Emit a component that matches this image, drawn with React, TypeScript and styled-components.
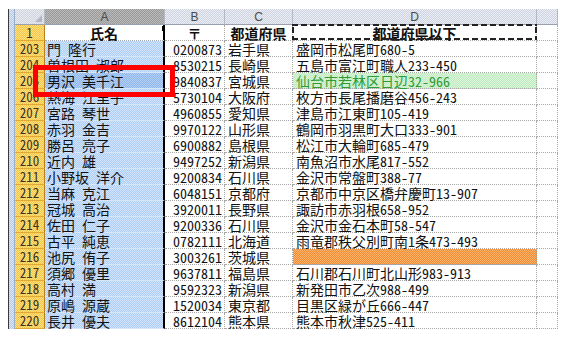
import React from 'react';
import styled, { createGlobalStyle, css } from 'styled-components';

const Global = createGlobalStyle`
  html, body { margin: 0; padding: 0; background: #fff; }
  body { width: 567px; height: 340px; overflow: hidden; }
`;

const dither = (a: string, b: string) => css`
  background-color: ${a};
  background-image: repeating-conic-gradient(${a} 0 25%, ${b} 0 50%);
  background-size: 2px 2px;
`;

const Page = styled.div`
  position: relative;
  padding: 9px 0 0 8px;
  font-family: "Noto Sans CJK JP", sans-serif;
  font-feature-settings: "hwid";
`;

const Sheet = styled.div`
  display: flex;
  align-items: stretch;
`;

const Strip = styled.div`
  width: 5px;
  border-left: 1px solid #3a3a3a;
  border-right: 1px solid #9aaec8;
  ${dither('#b8cae4', '#dde6f2')}
`;

const Grid = styled.div`
  display: grid;
  grid-template-columns: 30px 120px 60px 68px 244px 21px;
  grid-auto-rows: 16px;
`;

const Corner = styled.div`
  position: relative;
  box-sizing: border-box;
  border-right: 1px solid #b4b8c4;
  border-bottom: 1px solid #9aa0b0;
  ${dither('#cfd3de', '#e9ebf1')}
  &::after {
    content: '';
    position: absolute;
    right: 2px;
    bottom: 2px;
    border-left: 7px solid transparent;
    border-bottom: 7px solid #b2b6c0;
  }
`;

const ColHead = styled.div<{ $active?: boolean }>`
  box-sizing: border-box;
  display: flex;
  align-items: center;
  justify-content: center;
  font: 12px/1 "Liberation Sans", sans-serif;
  color: #4a4a4a;
  border-right: 1px solid #b4b8c4;
  border-bottom: 1px solid #9aa0b0;
  ${({ $active }) => ($active ? dither('#9a9a9a', '#bababa') : dither('#cfd3e0', '#eceef5'))}
`;

const RowHead = styled.div`
  box-sizing: border-box;
  display: flex;
  align-items: center;
  justify-content: center;
  font-size: 13px;
  line-height: 1;
  color: #3a3320;
  border-right: 1px solid #b8801e;
  border-bottom: 1px solid #e0a838;
  ${dither('#f4c44a', '#ffe27e')}
`;

type Fill = 'none' | 'blue' | 'blueDark' | 'green' | 'orange';

const fills: Record<Fill, ReturnType<typeof css> | string> = {
  none: 'background: #fff;',
  blue: dither('#aecdf4', '#d2e5fc'),
  blueDark: dither('#8fb7ec', '#b4cff4'),
  green: dither('#bfeac0', '#dcf6dc'),
  orange: dither('#f58c34', '#fbb46c'),
};

const Cell = styled.div<{
  $fill?: Fill;
  $align?: 'left' | 'right' | 'center';
  $bold?: boolean;
  $thick?: boolean;
  $green?: boolean;
  $pad?: number;
}>`
  position: relative;
  box-sizing: border-box;
  display: flex;
  align-items: center;
  justify-content: ${({ $align }) =>
    $align === 'right' ? 'flex-end' : $align === 'center' ? 'center' : 'flex-start'};
  padding: 0 ${({ $pad }) => $pad ?? 2}px;
  white-space: nowrap;
  font-size: 14px;
  line-height: 1;
  font-weight: ${({ $bold }) => ($bold ? 700 : 400)};
  color: ${({ $green }) => ($green ? '#2f9a36' : '#111')};
  border-bottom: 1px dotted #a8a8a8;
  border-right: ${({ $thick }) => ($thick ? '2px solid #000' : '1px dotted #a8a8a8')};
  ${({ $fill }) => fills[$fill ?? 'none']}
  ${({ $fill }) =>
    $fill === 'blue' || $fill === 'blueDark' ? 'border-bottom: 1px solid #d9e6f8;' : ''}
`;

const Handle = styled.div`
  position: absolute;
  right: -4px;
  top: 1px;
  width: 5px;
  height: 5px;
  background: #000;
`;

const Marquee = styled.div`
  position: absolute;
  inset: -1px -1px 0 -1px;
  pointer-events: none;
  background:
    linear-gradient(90deg, #222 66%, transparent 0) top left / 9px 2px repeat-x,
    linear-gradient(90deg, #222 66%, transparent 0) bottom left / 9px 2px repeat-x,
    linear-gradient(0deg, #222 66%, transparent 0) top left / 2px 9px repeat-y,
    linear-gradient(0deg, #222 66%, transparent 0) top right / 2px 9px repeat-y;
`;

const RedBox = styled.div`
  position: absolute;
  left: 33px;
  top: 65px;
  width: 142px;
  height: 32px;
  box-sizing: border-box;
  border: 5px solid #ff0000;
`;

const S = '\u2002';

type Row = [number, string, string, string, string, Fill?, boolean?];

const rows: Row[] = [
  [203, `門${S}隆行`, '0200873', '岩手県', '盛岡市松尾町680-5'],
  [204, `曽根田${S}淑郎`, '8530215', '長崎県', '五島市富江町職人233-450'],
  [205, `男沢${S}美千江`, '9840837', '宮城県', '仙台市若林区日辺32-966', 'green', true],
  [206, `熱海${S}江里子`, '5730104', '大阪府', '枚方市長尾播磨谷456-243'],
  [207, `宮路${S}琴世`, '4960855', '愛知県', '津島市江東町105-419'],
  [208, `赤羽${S}金吉`, '9970122', '山形県', '鶴岡市羽黒町大口333-901'],
  [209, `勝呂${S}亮子`, '6900882', '島根県', '松江市大輪町685-479'],
  [210, `近内${S}雄`, '9497252', '新潟県', '南魚沼市水尾817-552'],
  [211, `小野坂${S}洋介`, '9200834', '石川県', '金沢市常盤町388-77'],
  [212, `当麻${S}克江`, '6048151', '京都府', '京都市中京区橋弁慶町13-907'],
  [213, `冠城${S}高治`, '3920011', '長野県', '諏訪市赤羽根658-952'],
  [214, `佐田${S}仁子`, '9200336', '石川県', '金沢市金石本町58-547'],
  [215, `古平${S}純恵`, '0782111', '北海道', '雨竜郡秩父別町南1条473-493'],
  [216, `池尻${S}侑子`, '3003261', '茨城県', '', 'orange'],
  [217, `須郷${S}優里`, '9637811', '福島県', '石川郡石川町北山形983-913'],
  [218, `高村${S}満`, '9592323', '新潟県', '新発田市乙次988-499'],
  [219, `原嶋${S}源蔵`, '1520034', '東京都', '目黒区緑が丘666-447'],
  [220, `長井${S}優夫`, '8612104', '熊本県', '熊本市秋津525-411'],
];

export default function App() {
  return (
    <Page>
      <Global />
      <Sheet>
        <Strip />
        <Grid>
          <Corner />
          <ColHead $active>A</ColHead>
          <ColHead>B</ColHead>
          <ColHead>C</ColHead>
          <ColHead>D</ColHead>
          <ColHead />

          <RowHead>1</RowHead>
          <Cell $thick $bold $align="center">
            氏名
            <Handle />
          </Cell>
          <Cell $bold $align="center">〒</Cell>
          <Cell $bold $align="center">都道府県</Cell>
          <Cell $bold $align="center">
            都道府県以下
            <Marquee />
          </Cell>
          <Cell />

          {rows.map(([n, name, zip, pref, addr, fill, green]) => (
            <React.Fragment key={n}>
              <RowHead>{n}</RowHead>
              <Cell $thick $fill={n === 205 ? 'blueDark' : 'blue'}>{name}</Cell>
              <Cell $align="right">{zip}</Cell>
              <Cell $pad={3}>{pref}</Cell>
              <Cell $pad={3} $fill={fill} $green={green}>{addr}</Cell>
              <Cell />
            </React.Fragment>
          ))}
        </Grid>
      </Sheet>
      <RedBox />
    </Page>
  );
}
